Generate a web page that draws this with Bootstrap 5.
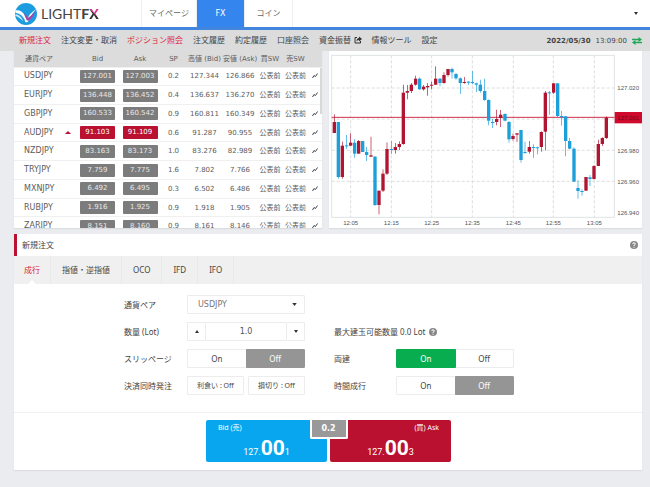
<!DOCTYPE html>
<html lang="ja">
<head>
<meta charset="utf-8">
<meta name="viewport" content="width=device-width, initial-scale=1">
<title>LIGHT FX</title>
<link href="https://cdn.jsdelivr.net/npm/bootstrap@5.3.0/dist/css/bootstrap.min.css" rel="stylesheet">
<style>
:root { --fx-red: #b9112f; --fx-grey: #959595; --fx-line: #ececec; }
body { font-family: "Noto Sans", "Noto Sans CJK JP", sans-serif; font-size: 8px; line-height: 12px; color: #444; background: #ebecef; }
a { color: inherit; text-decoration: none; }
.topbar { height: 30px; border-bottom: 3px solid #4285dd; }
.brand-box { width: 141px; padding-left: 14px; gap: 3px; }
.brand-name { font: 400 14px/20px Lato, sans-serif; color: #444; }
.brand-name b { font-weight: 900; }
.brand-name .brand-x { background: linear-gradient(45deg, #333 50%, #d8318f 50%); -webkit-background-clip: text; background-clip: text; color: transparent; }
.top-tab { width: 48px; border-right: 1px solid #eee; color: #666; font-family: "DejaVu Sans", "Noto Sans CJK JP", sans-serif; }
.top-tab.wide { width: 56px; border-left: 1px solid #eee; }
.top-tab.active { background: #3585ee; color: #fff; }
.menu-strip { height: 21px; gap: 10px; padding: 0 8px 0 19px; background: #dcdcdc; font-family: "DejaVu Sans", "Noto Sans CJK JP", sans-serif; }
.clock { font-size: 7px; gap: 5px; }
.fx-red { color: #dc1c40; }
.workspace { padding: 0 8px 16px 14px; }
.upper { gap: 7px; margin-bottom: 6px; }
.panel { background: #fff; box-shadow: 0 1px 1px #dcdde0; }
.rates { flex: 308 1 0; height: 177px; overflow: hidden; position: relative; }
.plot { flex: 313 1 0; }
.rates-table { width: 100%; height: 184px; table-layout: fixed; font: 7px/10px "DejaVu Sans", "Noto Sans CJK JP", sans-serif; text-align: center; color: #5c5c5c; }
.rates-table th, .rates-table td { padding: 0; white-space: nowrap; vertical-align: middle; font-weight: 400; }
.rates-table thead { background: #dcdcdc; height: 16px; }
.rates-table tbody tr { border-top: 1px solid #f0f0f0; }
.rates-table .pair { font-size: 8px; text-align: left; padding-left: 10px; }
.rates-table thead .pair { font-size: 7px; padding-left: 11px; }
.pill { width: 35px; height: 13px; padding: 0; border: 0; border-radius: 1px; background: #7c7c7c; color: #e8e8e8; font-size: 7px; line-height: 13px; display: block; margin: 0 auto; }
.up .pill { background: var(--fx-red); color: #fff; }
.tri-up, .tri-down { display: block; margin: 0 auto; width: 0; border: 2px solid transparent; }
.tri-up { border-top: 0; border-bottom: 3px solid #333; }
.tri-down { border-bottom: 0; border-top: 3px solid #333; }
.up .tri-up { border-width: 0 3px 3px; border-bottom-color: var(--fx-red); }
.scroll-thumb { position: absolute; right: 0; top: 17px; width: 2px; height: 46px; background: #d8d8d8; }
.order-head { height: 22px; border-left: 3px solid var(--fx-red); padding: 0 4px 0 5px; }
.order-tabs { height: 28px; background: #f0f0f0; }
.order-tabs .nav-link { padding: 0 11px; height: 28px; line-height: 28px; border-right: 1px solid #e9e9e9; color: #444; position: relative; border-radius: 0; }
.order-tabs .nav-link.active { color: #dc1c40; padding: 0 10px; }
.order-tabs .nav-link.active::after { content: ""; position: absolute; left: 50%; bottom: 0; margin-left: -4px; border: 4px solid transparent; border-top: 0; border-bottom-color: #fff; }
.order-form { display: grid; grid-template-columns: 63px 118px 91px 118px; grid-auto-rows: 19px; row-gap: 8px; column-gap: 0; padding: 11px 0 17px 110px; align-items: center; }
.order-form .right-label { padding-left: 29px; white-space: nowrap; }
.order-form .form-select, .order-form .form-control { font-size: 8px; line-height: 12px; min-height: 0; height: 19px; padding: 0 10px; border: 1px solid var(--fx-line); border-radius: 1px; color: #555; font-family: "DejaVu Sans", sans-serif; }
.order-form .form-select { --bs-form-select-bg-img: url("data:image/svg+xml,%3csvg xmlns='http://www.w3.org/2000/svg' viewBox='0 0 6 4'%3e%3cpath d='M0 0h6L3 4z' fill='%23333'/%3e%3c/svg%3e"); background-size: 5px 3px; background-position: right 7px center; color: #777; }
.order-form .btn { height: 19px; padding: 0; border: 1px solid var(--fx-line); border-radius: 1px; font-size: 8px; line-height: 17px; color: #444; }
.order-form .step-btn { width: 18px; flex: none; }
.order-form .btn-group .btn { width: 50%; }
.order-form .btn-check:checked + .btn { background: var(--fx-grey); border-color: var(--fx-grey); color: #fff; }
.order-form .btn-check:checked + .btn.go { background: #08ad50; border-color: #08ad50; }
.order-form .mini { font-size: 7px; flex: 1; }
.quote-row { border-top: 1px solid #f0f0f0; padding: 7px 0 8px; }
.quotes { width: 245px; gap: 3px; position: relative; margin-left: 192px; }
.quote { flex: 1; height: 42px; border: 0; border-radius: 2px; color: #fff; padding: 3px 12px; text-align: left; background: #07a6ee; font-size: 7px; line-height: 10px; }
.quote.ask { background: var(--fx-red); text-align: right; }
.quote .price { display: block; text-align: center; font: 9px/22px Roboto, sans-serif; margin-top: 4px; }
.quote .price strong { font-size: 21px; font-weight: 700; }
.spread { position: absolute; top: 0; left: 50%; width: 38px; margin-left: -19px; height: 19px; border: 2px solid #fff; border-top: 0; border-radius: 0 0 2px 2px; background: #999; color: #fff; text-align: center; line-height: 17px; font-weight: 700; font-family: "DejaVu Sans", sans-serif; }
</style>
<script src="https://cdn.jsdelivr.net/npm/bootstrap@5.3.0/dist/js/bootstrap.bundle.min.js"></script>
</head>
<body>
<header class="topbar bg-white d-flex">
  <a href="#" class="brand-box d-flex align-items-center">
    <svg width="24" height="24" viewBox="0 0 72 72" aria-hidden="true"><circle cx="36" cy="36" r="33" fill="#1c9ce0"/><path d="M4 25Q24 22 33 42Q37 52 40 52Q46 34 66 22Q52 36 44 56Q40 63 34 60Q28 36 4 32Z" fill="#fff"/><path d="M4 37Q20 38 28 58Q14 44 4 42Z" fill="#fff" opacity=".8"/><path d="M30 34Q38 38 41 48Q50 42 63 29Q58 46 44 56Q38 58 36 50Z" fill="#a846a8"/></svg>
    <span class="brand-name">LIGHT<b>F<span class="brand-x">X</span></b></span>
  </a>
  <nav class="d-flex text-center align-items-stretch">
    <a href="#" class="top-tab wide d-flex align-items-center justify-content-center">マイページ</a>
    <a href="#" class="top-tab active d-flex align-items-center justify-content-center">FX</a>
    <a href="#" class="top-tab d-flex align-items-center justify-content-center">コイン</a>
  </nav>
  <button type="button" class="btn border-0 p-0 ms-auto me-2 px-1 d-flex align-items-center" aria-label="アカウント"><span class="tri-down"></span></button>
</header>
<nav class="menu-strip d-flex align-items-center text-nowrap">
  <a href="#" class="fx-red">新規注文</a>
  <a href="#">注文変更・取消</a>
  <a href="#" class="fx-red">ポジション照会</a>
  <a href="#">注文履歴</a>
  <a href="#">約定履歴</a>
  <a href="#">口座照会</a>
  <a href="#">資金振替 <svg width="8" height="8" viewBox="0 0 16 16" aria-hidden="true"><path d="M6 3H2v11h11v-4" fill="none" stroke="#333" stroke-width="2"/><path d="M10 1l6 5-6 5V8Q6 8 5 11Q5 4 10 4Z" fill="#333"/></svg></a>
  <a href="#">情報ツール</a>
  <a href="#">設定</a>
  <span class="clock ms-auto d-flex align-items-center"><b>2022/05/30</b> <span>13:09:00</span>
    <svg width="10" height="8" viewBox="0 0 20 16" aria-hidden="true"><path d="M0 5h14M6 11h14" stroke="#20a858" stroke-width="3"/><path d="M13 0l7 5-7 5zM7 6l-7 5 7 5z" fill="#20a858"/></svg></span>
</nav>
<main class="workspace">
  <div class="upper d-flex">
    <section class="panel rates">
      <table class="rates-table">
        <colgroup><col style="width:46px"><col style="width:16px"><col style="width:43px"><col style="width:42px"><col style="width:25px"><col style="width:37px"><col style="width:34px"><col style="width:26px"><col style="width:25px"><col style="width:14px"></colgroup>
        <thead><tr><th class="pair">通貨ペア</th><th></th><th>Bid</th><th>Ask</th><th>SP</th><th>高値 (Bid)</th><th>安値 (Ask)</th><th>買SW</th><th>売SW</th><th></th></tr></thead>
        <tbody id="rateRows"></tbody>
      </table>
      <div class="scroll-thumb"></div>
    </section>
    <section class="panel plot">
      <svg id="chart" class="d-block w-100" viewBox="12 18 939 531" font-family="Liberation Sans, Arial, sans-serif" font-size="18" fill="#555" role="img" aria-label="USDJPY">
        <rect x="20" y="31" width="848" height="486" fill="none" stroke="#dfe3e6" stroke-width="3"/>
        <path d="M77 31V517M199 31V517M320 31V517M442 31V517M565 31V517M685 31V517M808 31V517M20 129H868M20 222H868M20 316H868M20 409H868" stroke="#dcdcdc" stroke-width="3" stroke-dasharray="9 6" fill="none"/>
        <path d="M20 217H868" stroke="#d0304c" stroke-width="3"/>
        <g id="candles"></g>
        <rect x="869" y="201" width="82" height="34" fill="#cf0a2c"/>
        <g><text x="877" y="136">127.020</text><text x="877" y="225" fill="#6b0c20">127.001</text><text x="877" y="323">126.980</text><text x="877" y="416">126.960</text><text x="877" y="510">126.940</text></g>
        <g text-anchor="middle"><text x="77" y="540">12:05</text><text x="199" y="540">12:15</text><text x="320" y="540">12:25</text><text x="442" y="540">12:35</text><text x="565" y="540">12:45</text><text x="685" y="540">12:55</text><text x="808" y="540">13:05</text></g>
      </svg>
    </section>
  </div>
  <section class="panel">
    <div class="order-head d-flex align-items-center justify-content-between">新規注文
      <svg width="8" height="8" viewBox="0 0 16 16" aria-hidden="true"><circle cx="8" cy="8" r="8" fill="#888"/><path d="M5.500 6Q5.500 3.500 8 3.500T10.500 6Q10.500 7.500 8 8.500V10M8 11.500V13.500" fill="none" stroke="#fff" stroke-width="2"/></svg>
    </div>
    <nav class="order-tabs nav">
      <a class="nav-link active" href="#">成行</a><a class="nav-link" href="#">指値・逆指値</a><a class="nav-link" href="#">OCO</a><a class="nav-link" href="#">IFD</a><a class="nav-link" href="#">IFO</a>
    </nav>
    <form>
      <div class="order-form">
        <label for="pair">通貨ペア</label>
        <select id="pair" class="form-select"><option>USDJPY</option></select>
        <span></span><span></span>

        <label for="lot">数量 (Lot)</label>
        <div class="d-flex">
          <button type="button" class="btn step-btn border-end-0" aria-label="増やす"><span class="tri-up"></span></button>
          <input id="lot" class="form-control text-center" value="1.0">
          <button type="button" class="btn step-btn border-start-0" aria-label="減らす"><span class="tri-down"></span></button>
        </div>
        <span class="right-label d-flex align-items-center gap-1">最大建玉可能数量 0.0 Lot <svg class="flex-shrink-0" width="8" height="8" viewBox="0 0 16 16" aria-hidden="true"><circle cx="8" cy="8" r="8" fill="#888"/><path d="M5.500 6Q5.500 3.500 8 3.500T10.500 6Q10.500 7.500 8 8.500V10M8 11.500V13.500" fill="none" stroke="#fff" stroke-width="2"/></svg></span><span></span>

        <span>スリッページ</span>
        <div class="btn-group" role="group" aria-label="スリッページ">
          <input class="btn-check" type="radio" name="slip" id="slipOn"><label class="btn" for="slipOn">On</label>
          <input class="btn-check" type="radio" name="slip" id="slipOff" checked><label class="btn" for="slipOff">Off</label>
        </div>
        <span class="right-label">両建</span>
        <div class="btn-group" role="group" aria-label="両建">
          <input class="btn-check" type="radio" name="hedge" id="hedgeOn" checked><label class="btn go" for="hedgeOn">On</label>
          <input class="btn-check" type="radio" name="hedge" id="hedgeOff"><label class="btn" for="hedgeOff">Off</label>
        </div>

        <span>決済同時発注</span>
        <div class="d-flex gap-1">
          <button type="button" class="btn mini">利食い : Off</button><button type="button" class="btn mini">損切り : Off</button>
        </div>
        <span class="right-label">時間成行</span>
        <div class="btn-group" role="group" aria-label="時間成行">
          <input class="btn-check" type="radio" name="timed" id="timedOn"><label class="btn" for="timedOn">On</label>
          <input class="btn-check" type="radio" name="timed" id="timedOff" checked><label class="btn" for="timedOff">Off</label>
        </div>
      </div>
      <div class="quote-row">
        <div class="quotes d-flex">
          <button type="button" class="quote">Bid (売)<span class="price">127.<strong>00</strong>1</span></button>
          <button type="button" class="quote ask">(買) Ask<span class="price">127.<strong>00</strong>3</span></button>
          <div class="spread">0.2</div>
        </div>
      </div>
    </form>
  </section>
</main>
<script>
const rates = [
  ["USDJPY", "127.001", "127.003", "0.2", "127.344", "126.866"],
  ["EURJPY", "136.448", "136.452", "0.4", "136.637", "136.270"],
  ["GBPJPY", "160.533", "160.542", "0.9", "160.811", "160.349"],
  ["AUDJPY", "91.103", "91.109", "0.6", "91.287", "90.955", true],
  ["NZDJPY", "83.163", "83.173", "1.0", "83.276", "82.989"],
  ["TRYJPY", "7.759", "7.775", "1.6", "7.802", "7.766"],
  ["MXNJPY", "6.492", "6.495", "0.3", "6.502", "6.486"],
  ["RUBJPY", "1.916", "1.925", "0.9", "1.918", "1.905"],
  ["ZARJPY", "8.151", "8.160", "0.9", "8.161", "8.146"]
];
document.getElementById("rateRows").innerHTML = rates.map(([pair, bid, ask, sp, high, low, up]) =>
  `<tr class="${up ? "up" : ""}"><td class="pair">${pair}</td><td>${up ? '<span class="tri-up"></span>' : ""}</td>
  <td><button type="button" class="pill">${bid}</button></td><td><button type="button" class="pill">${ask}</button></td>
  <td>${sp}</td><td>${high}</td><td>${low}</td><td>公表前</td><td>公表前</td>
  <td><svg class="d-block mx-auto" width="6" height="6" viewBox="0 0 12 12"><path d="M1 10L4 5L7 7L11 1" fill="none" stroke="#444" stroke-width="2"/></svg></td></tr>`).join("");

// One candle a minute: high, low, body top, body bottom, rising (1) or falling (0)
const candles = [
  [208,264,231,264,1],[231,401,231,396,0],[290,401,302,396,1],[270,312,301,303,0],[265,302,293,302,1],[283,338,293,326,0],
  [285,326,288,326,1],[288,321,288,321,0],[306,348,321,330,0],[275,335,331,335,1],[333,483,335,480,0],[437,508,437,480,1],
  [373,441,386,437,1],[292,390,312,386,1],[288,327,312,314,0],[294,326,306,315,1],[289,315,297,306,1],[119,299,143,297,1],
  [120,163,138,143,1],[114,144,119,138,1],[92,122,101,119,1],[97,134,101,133,0],[120,137,125,133,1],[114,152,123,127,1],
  [110,133,119,122,1],[64,120,101,119,1],[99,124,101,114,0],[82,116,90,114,1],[72,95,72,90,1],[68,101,72,82,0],
  [84,104,87,100,0],[97,147,100,114,0],[96,116,111,114,1],[108,120,110,112,0],[78,118,111,114,0],[113,141,115,119,0],
  [104,143,119,138,0],[101,167,138,165,0],[163,241,165,227,0],[222,249,231,233,0],[194,241,222,231,1],[195,246,209,219,1],
  [205,229,207,227,0],[228,293,231,283,0],[266,287,273,282,1],[264,291,265,269,1],[255,353,255,345,0],[290,326,321,323,0],
  [288,326,306,320,1],[298,339,306,308,0],[305,328,307,310,0],[259,320,261,306,1],[138,316,143,260,1],[138,209,142,144,0],
  [114,147,115,143,1],[114,216,115,213,0],[198,242,213,217,0],[213,334,214,288,0],[279,313,288,311,0],[307,410,311,410,0],
  [406,461,429,438,0],[433,452,438,440,0],[396,438,396,437,1],[390,423,397,402,0],[361,404,363,402,1],[284,363,297,363,1],
  [277,303,279,297,1],[214,282,218,279,1]
];
document.getElementById("candles").innerHTML = candles.map(([high, low, top, bottom, rising], i) => {
  const x = Math.round(28 + i * 816 / 67), c = rising ? "#b01632" : "#1c9fdb";
  return `<rect x="${x - 1}" y="${high}" width="2" height="${low - high}" fill="${c}"/><rect x="${x - 5}" y="${top}" width="10" height="${Math.max(bottom - top, 3)}" fill="${c}"/>`;
}).join("");
</script>
</body>
</html>
